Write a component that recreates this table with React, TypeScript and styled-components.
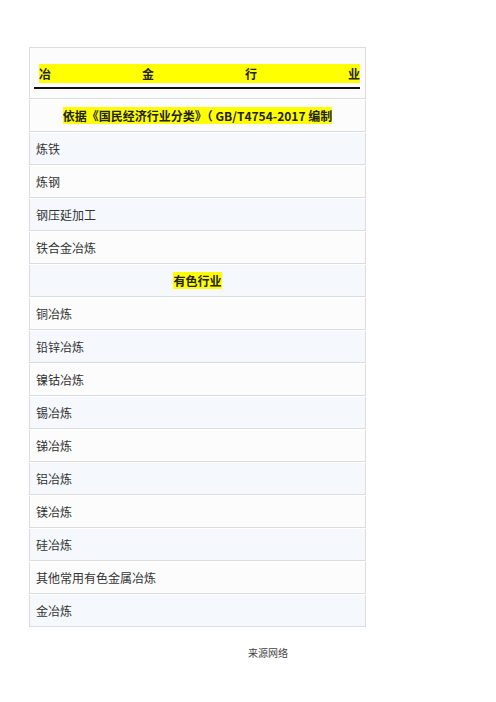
import React from 'react';
import styled, { createGlobalStyle } from 'styled-components';

const GlobalStyle = createGlobalStyle`
  html, body {
    margin: 0;
    padding: 0;
    background: #ffffff;
  }
  body {
    font-family: "Noto Sans CJK SC", "Noto Sans", sans-serif;
    color: #333;
  }
`;

const rows = [
  { label: '炼铁' },
  { label: '炼钢' },
  { label: '钢压延加工' },
  { label: '铁合金冶炼' },
  { label: '有色行业', section: true },
  { label: '铜冶炼' },
  { label: '铅锌冶炼' },
  { label: '镍钴冶炼' },
  { label: '锡冶炼' },
  { label: '锑冶炼' },
  { label: '铝冶炼' },
  { label: '镁冶炼' },
  { label: '硅冶炼' },
  { label: '其他常用有色金属冶炼' },
  { label: '金冶炼' },
];

export default function App() {
  return (
    <>
      <GlobalStyle />
      <Page>
        <Table>
          <TitleRow>
            <TitleBand>
              <span>冶</span>
              <span>金</span>
              <span>行</span>
              <span>业</span>
            </TitleBand>
            <TitleRule />
          </TitleRow>
          <Row centered>
            <Mark>依据《国民经济行业分类》（ GB/T4754-2017 编制</Mark>
          </Row>
          {rows.map((r, i) => (
            <Row key={r.label} striped={i % 2 === 0} centered={r.section}>
              {r.section ? <Mark>{r.label}</Mark> : r.label}
            </Row>
          ))}
        </Table>
        <Footer>来源网络</Footer>
      </Page>
    </>
  );
}

const Page = styled.div`
  width: 496px;
  min-height: 702px;
  padding: 47px 0 0 29px;
  box-sizing: border-box;
`;

const Table = styled.div`
  width: 337px;
  display: flex;
  flex-direction: column;
  gap: 1px;
`;

const TitleRow = styled.div`
  height: 52px;
  box-sizing: border-box;
  border: 1px solid #dcdcdc;
  background: #fcfcfc;
  padding: 16px 5px 0 4px;
  display: flex;
  flex-direction: column;
`;

const TitleBand = styled.div`
  margin-left: 5px;
  height: 19px;
  background: #ffff00;
  display: flex;
  justify-content: space-between;
  align-items: center;
  font-size: 12px;
  font-weight: bold;
  color: #222;
`;

const TitleRule = styled.div`
  margin-top: 4px;
  height: 1.5px;
  background: #111;
`;

const Row = styled.div<{ striped?: boolean; centered?: boolean }>`
  height: 32px;
  box-sizing: border-box;
  border-left: 1px solid #dcdcdc;
  border-right: 1px solid #dcdcdc;
  border-bottom: 1px solid #dcdcdc;
  background: ${({ striped }) => (striped ? '#f5f9fe' : '#fcfcfc')};
  display: flex;
  align-items: center;
  justify-content: ${({ centered }) => (centered ? 'center' : 'flex-start')};
  padding: 0 6px;
  font-size: 12px;
  color: #333;
`;

const Mark = styled.span`
  background: #ffff00;
  font-weight: bold;
  color: #222;
  line-height: 17px;
`;

const Footer = styled.div`
  width: 337px;
  margin-top: 18px;
  padding-left: 219px;
  box-sizing: border-box;
  font-family: "Liberation Serif", "Noto Sans CJK SC", serif;
  font-size: 10px;
  color: #444;
`;
